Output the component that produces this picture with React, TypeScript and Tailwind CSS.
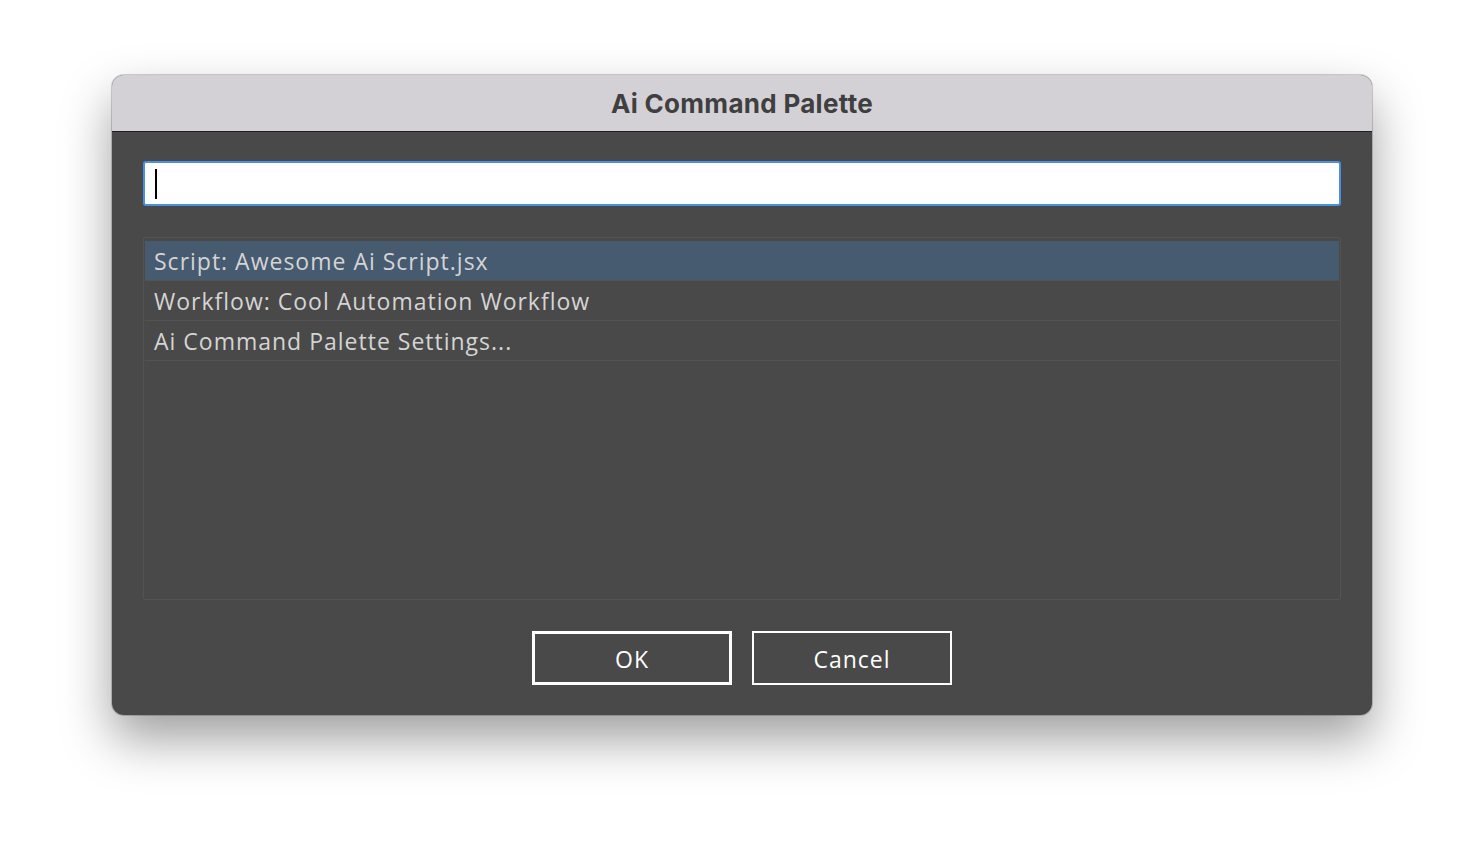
export default function App() {
  const rows = [
    "Script: Awesome Ai Script.jsx",
    "Workflow: Cool Automation Workflow",
    "Ai Command Palette Settings...",
  ];
  return (
    <div className="w-[1484px] h-[864px] bg-white flex justify-center pt-[75px]">
      <div className="w-[1260px] h-[640px] rounded-[12px] overflow-hidden bg-[#494949] flex flex-col shadow-[0_0_0_1px_rgba(0,0,0,0.18),0_24px_50px_rgba(0,0,0,0.38)]">
        <div className="h-[57px] shrink-0 bg-[#d3d1d6] border-b border-[#202020] flex items-center justify-center">
          <span className="text-[26px] font-bold text-[#3f3f3f] font-['Inter',sans-serif] tracking-[0.3px]">
            Ai Command Palette
          </span>
        </div>
        <div className="flex flex-col px-[31px] pt-[29px]">
          <div className="h-[45px] bg-white rounded-[3px] border-2 border-[#4a90e2] flex items-center pl-[10px]">
            <div className="w-[2px] h-[30px] bg-black" />
          </div>
          <div className="mt-[31px] h-[363px] border border-[#535353] rounded-[2px] pt-[3px] px-[1px] flex flex-col">
            {rows.map((r, i) => (
              <div
                key={r}
                className={`h-[40px] flex items-center pl-[9px] pt-[2px] border-b border-[#535353] text-[23px] tracking-[1px] text-[#d4d4d4] font-['Open_Sans',sans-serif] ${i === 0 ? "bg-[#465a70]" : ""}`}
              >
                {r}
              </div>
            ))}
          </div>
          <div className="mt-[31px] flex justify-center gap-[20px] font-['Open_Sans',sans-serif] text-[23px] tracking-[1px] text-white">
            <button className="w-[200px] h-[54px] pt-[3px] border-[3px] border-white flex items-center justify-center">OK</button>
            <button className="w-[200px] h-[54px] pt-[3px] border-2 border-white flex items-center justify-center">Cancel</button>
          </div>
        </div>
      </div>
    </div>
  );
}
